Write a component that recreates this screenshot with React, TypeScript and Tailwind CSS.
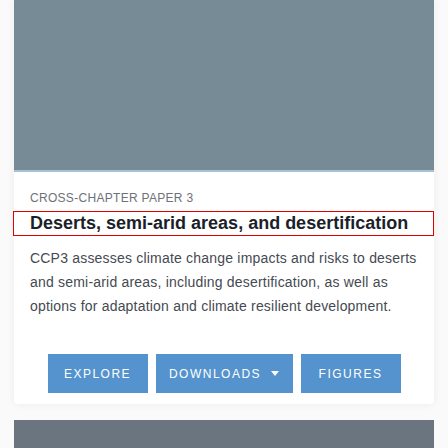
export default function App() {
  return (
    <div className="w-[448px] h-[448px] overflow-hidden bg-[#fafafa] px-[14px] font-['Liberation_Sans',Arial,sans-serif]">
      <div className="bg-white rounded-b shadow-[0_0_10px_rgba(0,0,0,0.06)]">
        <div className="h-[170px] bg-[#778b97]"></div>
        <div className="h-[2px] bg-[#a6c3d3]"></div>

        <div className="pt-[17px] pl-4 text-[12px] leading-[18px] tracking-[0.3px] text-[#6e7178] uppercase">
          Cross-Chapter Paper 3
        </div>
        <h2 className="mt-[4px] -ml-px border border-[#e00000] pl-[16px] text-[18px] leading-[23px] font-bold text-[#1c1f2a]">
          Deserts, semi-arid areas, and desertification
        </h2>

        <p className="mt-[10px] px-4 text-[14px] leading-[24px] tracking-[0.2px] text-[#454a52]">
          CCP3 assesses climate change impacts and risks to deserts and semi-arid areas, including desertification, as well as options for adaptation and climate resilient development.
        </p>

        <div className="flex justify-center gap-2 pt-[36px] pb-[11px]">
          <button className="w-[100px] h-[39px] bg-[#5593ce] text-white text-[12px] tracking-[1.5px] uppercase">
            Explore
          </button>
          <button className="w-[137px] h-[39px] bg-[#5593ce] text-white text-[12px] tracking-[1.5px] uppercase flex items-center justify-center gap-[10px]">
            Downloads
            <svg width="8" height="5" viewBox="0 0 8 5"><path d="M0 0h8L4 5z" fill="white" /></svg>
          </button>
          <button className="w-[100px] h-[39px] bg-[#5593ce] text-white text-[12px] tracking-[1.5px] uppercase">
            Figures
          </button>
        </div>
      </div>

      <div className="mt-4 h-[40px] bg-[#6b7580]"></div>
    </div>
  )
}
